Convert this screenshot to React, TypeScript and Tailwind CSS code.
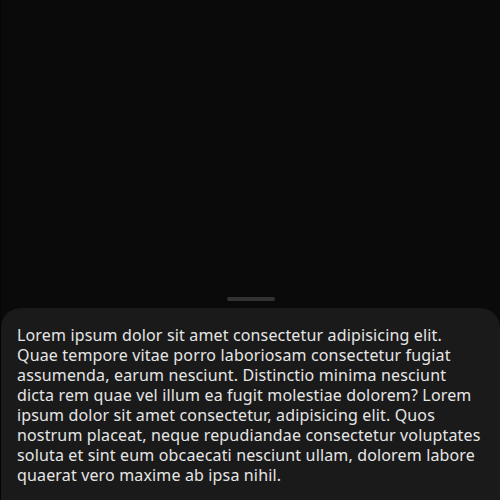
import React from 'react';

const text =
  'Lorem ipsum dolor sit amet consectetur adipisicing elit. Quae tempore vitae porro laboriosam consectetur fugiat assumenda, earum nesciunt. Distinctio minima nesciunt dicta rem quae vel illum ea fugit molestiae dolorem? Lorem ipsum dolor sit amet consectetur, adipisicing elit. Quos nostrum placeat, neque repudiandae consectetur voluptates soluta et sint eum obcaecati nesciunt ullam, dolorem labore quaerat vero maxime ab ipsa nihil.';

const App: React.FC = () => {
  return (
    <div className="h-[500px] w-[500px] overflow-hidden bg-[#0a0a0a] border-l border-[#050505] flex flex-col">
      {/* area above the sheet */}
      <div className="flex-1" />

      {/* handle */}
      <div className="flex justify-center pb-[7px]">
        <div className="h-[4px] w-[48px] rounded-full bg-[#333333]" />
      </div>

      {/* bottom sheet */}
      <div className="h-[192px] rounded-t-[20px] bg-[#1a1a1a] pl-[16px] pr-[17px] pt-[17px]">
        <p className="font-['Noto_Sans',sans-serif] text-[16px] leading-[20px] tracking-[0.15px] text-[#e6e6e6]">
          {text}
        </p>
      </div>
    </div>
  );
};

export default App;
